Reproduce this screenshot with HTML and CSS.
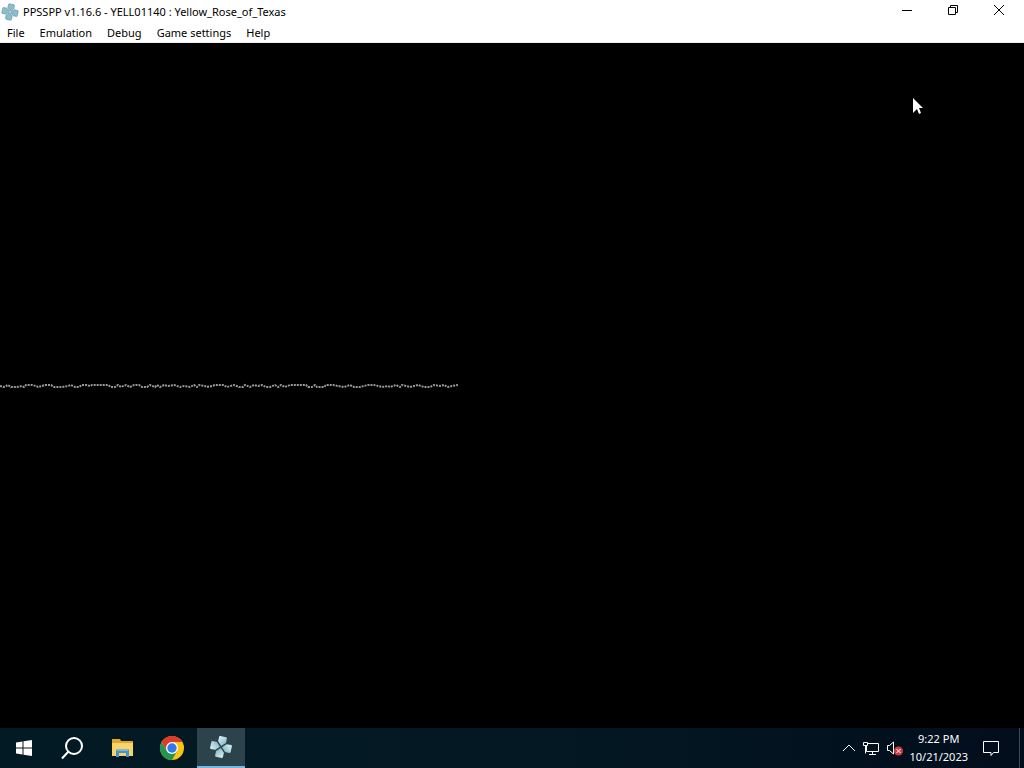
FILE: index.html
```html
<!DOCTYPE html>
<html lang="en">
<head>
<meta charset="utf-8">
<title>PPSSPP v1.16.6 - YELL01140 : Yellow_Rose_of_Texas</title>
<link rel="stylesheet" href="styles.css">
</head>
<body>
<svg class="defs" aria-hidden="true">
  <defs>
    <linearGradient id="pad" x1="0" y1="0" x2="1" y2="1"><stop offset="0" stop-color="#e0f4f8"/><stop offset="1" stop-color="#79adbf"/></linearGradient>
    <symbol id="dpad" viewBox="0 0 24 24">
      <g transform="rotate(12 12 12)">
        <path id="arm" d="M9 1.500h6q1 0 1 1v4.500L12 11 8 7V2.500q0-1 1-1z"/>
        <use href="#arm" transform="rotate(90 12 12)"/>
        <use href="#arm" transform="rotate(180 12 12)"/>
        <use href="#arm" transform="rotate(270 12 12)"/>
      </g>
    </symbol>
  </defs>
</svg>
<div class="desktop">
  <header class="titlebar">
    <svg class="app-icon" width="18" height="18"><use href="#dpad"/></svg>
    <h1 class="title">PPSSPP v1.16.6 - YELL01140 : Yellow_Rose_of_Texas</h1>
    <div class="controls">
      <button class="control" aria-label="Minimize"><svg width="12" height="12"><path d="M1 6.500h10"/></svg></button>
      <button class="control" aria-label="Restore"><svg width="12" height="12"><path d="M1.500 3.500h7v7h-7zM3.500 3.500v-2h7v7h-2"/></svg></button>
      <button class="control" aria-label="Close"><svg width="12" height="12"><path d="M1 1l10 10M11 1L1 11"/></svg></button>
    </div>
  </header>
  <nav class="menubar">
    <button class="menu">File</button>
    <button class="menu">Emulation</button>
    <button class="menu">Debug</button>
    <button class="menu">Game settings</button>
    <button class="menu">Help</button>
  </nav>
  <main class="screen">
    <svg class="wave" width="460" height="8"><polyline points="0,4 4,5 8,3 11,5 17,5 22,4 24,5 26,3 32,3 36,4 38,5 42,4 45,3 51,3 54,5 62,5 68,4 71,3 75,5 79,5 82,3 87,3 90,4 92,3 96,3 108,3 111,5 115,5 118,3 121,5 126,3 130,5 134,3 139,3 142,5 147,5 150,3 155,5 157,3 160,5 164,3 168,4 174,3 180,5 184,4 190,5 194,3 197,5 199,3 205,4 207,5 212,4 215,3 223,3 227,5 234,3 239,5 243,5 245,3 250,5 254,3 258,4 262,3 266,5 270,5 275,3 278,5 281,3 285,5 290,3 300,3 306,3 308,5 312,5 315,3 317,5 321,5 324,5 326,3 333,3 338,4 344,5 350,3 354,5 360,5 368,3 374,3 382,5 388,4 390,5 396,3 400,5 402,3 410,5 414,4 418,3 424,5 430,5 434,3 440,4 444,3 448,5 452,4 458,3"/></svg>
    <svg class="cursor" width="12" height="18"><path d="M1 1v15l4-4 2 5 2-1-2-5h4z"/></svg>
  </main>
  <footer class="taskbar">
    <button class="task" aria-label="Start"><svg width="18" height="18"><path fill="#fff" d="M1 3.500l6.500-1v6H1zM8.500 2.300L17 1v7.500H8.500zM1 9.500h6.500v6L1 14.500zM8.500 9.500H17V17l-8.500-1.300z"/></svg></button>
    <button class="task" aria-label="Search"><svg width="24" height="24" fill="none" stroke="#fff" stroke-width="2"><circle cx="13" cy="10" r="8"/><path d="M7.500 15.500L1 22.500"/></svg></button>
    <button class="task" aria-label="File Explorer"><svg width="22" height="20"><path fill="#e2a52f" d="M0 1h8l1 2h12v6H0z"/><path fill="#fbd267" d="M0 5h21v13H0z"/><path fill="#3e98cf" d="M4 19v-7l1-1h11l1 1v7h-3v-4H7v4z"/><path fill="#7ab8d6" d="M5 11h11v2H5z"/></svg></button>
    <button class="task" aria-label="Google Chrome"><svg width="24" height="24"><circle cx="12" cy="12" r="12" fill="#fbc516"/><path fill="#de3a2d" d="M1.600 6A12 12 0 0 1 22.400 6H12L6.800 15z"/><path fill="#249653" d="M1.600 6A12 12 0 0 0 12 24l5.200-9L12 16 6.800 15z"/><circle cx="12" cy="12" r="6" fill="#fff"/><circle cx="12" cy="12" r="4.700" fill="#3079e6"/></svg></button>
    <button class="task active" aria-label="PPSSPP"><svg class="pad" width="24" height="24"><use href="#dpad"/></svg></button>
    <div class="tray">
      <button class="tray-item" aria-label="Show hidden icons"><svg width="14" height="16"><path d="M1 11l6-6 6 6"/></svg></button>
      <button class="tray-item" aria-label="Network"><svg width="18" height="16"><path d="M6 3.500h10.500v8H4.500V6M1.500 2.500h4v3h-4zM3.500 5.500v8M10.500 11.500v3M7 14.500h7"/></svg></button>
      <button class="tray-item" aria-label="Volume muted"><svg width="18" height="16"><path d="M1.500 5.500h2L7.500 2v12l-4-3.500h-2z"/><circle cx="12.500" cy="11" r="4.500" fill="#d03a42" stroke="none"/><path d="M10.500 9l4 4M14.500 9l-4 4"/></svg></button>
      <button class="clock"><span>9:22 PM</span><span>10/21/2023</span></button>
      <button class="tray-item notes" aria-label="Notifications"><svg width="18" height="18"><path d="M1.500 2.500h15v11h-5l-2.500 3v-3H1.500z"/></svg></button>
      <button class="show-desktop" aria-label="Show desktop"></button>
    </div>
  </footer>
</div>
</body>
</html>
```
FILE: styles.css
```css
* { box-sizing: border-box; }
body { margin: 0; font-family: "Noto Sans", "Open Sans", sans-serif; font-size: 11px; color: #000; }
button { font: inherit; color: inherit; background: none; border: 0; padding: 0; }
svg { display: block; }
.defs { position: absolute; width: 0; height: 0; }
.desktop { min-height: 100vh; display: flex; flex-direction: column; background: #000; }
.titlebar { display: flex; align-items: center; height: 24px; padding-left: 1px; background: #fff; }
.app-icon { fill: #8fbccb; stroke: #6f9fb2; }
.title { flex: 1; margin: 0 0 0 4px; font-size: 11px; font-weight: 400; line-height: 16px; }
.controls { display: flex; align-self: flex-start; padding-right: 2px; }
.control { width: 46px; height: 20px; display: flex; align-items: center; justify-content: center; }
.control svg { fill: none; stroke: #000; }
.menubar { display: flex; gap: 1px; height: 19px; background: #fff; border-bottom: 1px solid #f0f0f0; }
.menu { padding: 0 7px; line-height: 18px; }
.screen { flex: 1; display: flex; align-items: center; position: relative; background: #000; }
.wave { fill: none; stroke: #999; stroke-width: 2; stroke-dasharray: 2 1; }
.cursor { position: absolute; right: 100px; top: 54px; fill: #fff; }
.taskbar { display: flex; height: 40px; background: linear-gradient(90deg, #021a23, #031722 60%, #020d1c); color: #fff; }
.task { width: 48px; margin-right: 1px; display: flex; align-items: center; justify-content: center; }
.task:nth-child(2) { margin-right: 2px; }
.active { background: #2d434c; border-bottom: 2px solid #79b6e5; }
.pad { fill: url(#pad); }
.tray { margin-left: auto; display: flex; align-items: center; }
.tray-item { padding: 0 3px; }
.tray-item svg { fill: none; stroke: #fff; }
.clock { display: flex; flex-direction: column; align-items: center; padding: 0 4px 0 2px; line-height: 18px; }
.notes { padding: 0 10px; }
.show-desktop { align-self: stretch; width: 5px; margin-left: 9px; border-left: 1px solid #3a4955; }
```
